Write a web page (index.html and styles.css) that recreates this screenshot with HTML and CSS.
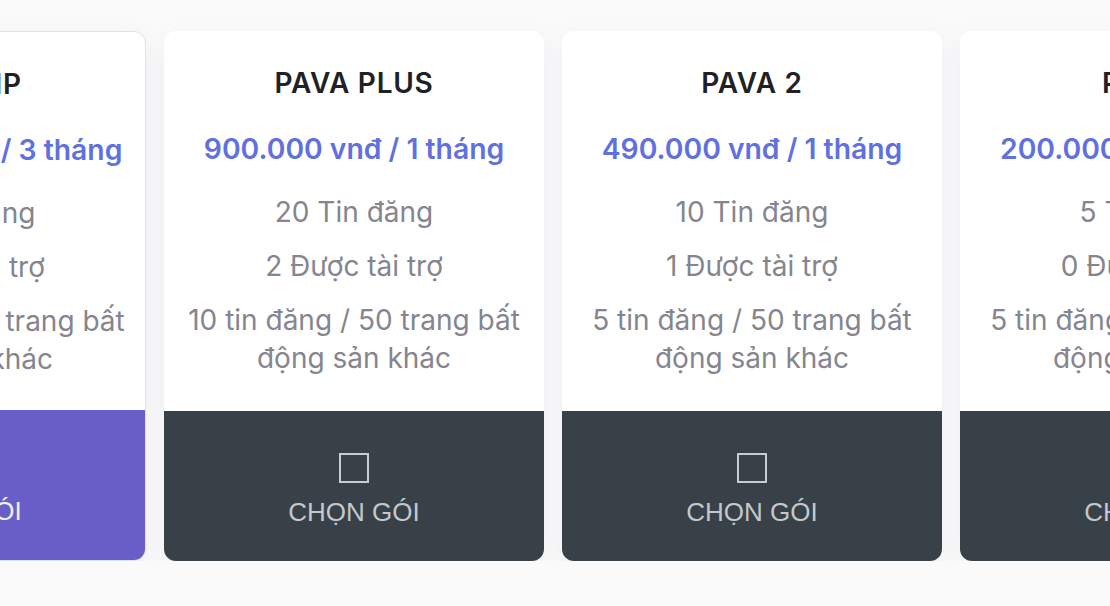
FILE: index.html
```html
<!DOCTYPE html>
<html lang="vi">
<head>
<meta charset="utf-8">
<title>Gói dịch vụ</title>
<link rel="stylesheet" href="styles.css">
</head>
<body>
<div class="viewport">
  <div class="track">
    <div class="card card-active">
      <div class="card-body">
        <h3 class="card-title">PAVA VIP</h3>
        <div class="card-price">2.000.000 vnđ / 3 tháng</div>
        <ul class="features">
          <li>60 Tin đăng</li>
          <li>5 Được tài trợ</li>
          <li>30 tin đăng / 50 trang bất động sản khác</li>
        </ul>
      </div>
      <button class="card-footer">
        <span class="check"></span>
        <span class="choose">CHỌN GÓI</span>
      </button>
    </div>
    <div class="card">
      <div class="card-body">
        <h3 class="card-title">PAVA PLUS</h3>
        <div class="card-price">900.000 vnđ / 1 tháng</div>
        <ul class="features">
          <li>20 Tin đăng</li>
          <li>2 Được tài trợ</li>
          <li>10 tin đăng / 50 trang bất động sản khác</li>
        </ul>
      </div>
      <button class="card-footer">
        <span class="check"></span>
        <span class="choose">CHỌN GÓI</span>
      </button>
    </div>
    <div class="card">
      <div class="card-body">
        <h3 class="card-title">PAVA 2</h3>
        <div class="card-price">490.000 vnđ / 1 tháng</div>
        <ul class="features">
          <li>10 Tin đăng</li>
          <li>1 Được tài trợ</li>
          <li>5 tin đăng / 50 trang bất động sản khác</li>
        </ul>
      </div>
      <button class="card-footer">
        <span class="check"></span>
        <span class="choose">CHỌN GÓI</span>
      </button>
    </div>
    <div class="card">
      <div class="card-body">
        <h3 class="card-title">PAVA 1</h3>
        <div class="card-price">200.000 vnđ / 1 tháng</div>
        <ul class="features">
          <li>5 Tin đăng</li>
          <li>0 Được tài trợ</li>
          <li>5 tin đăng / 50 trang bất động sản khác</li>
        </ul>
      </div>
      <button class="card-footer">
        <span class="check"></span>
        <span class="choose">CHỌN GÓI</span>
      </button>
    </div>
  </div>
</div>
</body>
</html>
```

FILE: styles.css
```css
html, body {
  margin: 0;
  padding: 0;
}

body {
  background: #fafafb;
  font-family: Inter, "Noto Sans", sans-serif;
  width: 1110px;
  height: 606px;
  overflow: hidden;
}

.viewport {
  width: 1110px;
  overflow: hidden;
}

.track {
  display: flex;
  gap: 18px;
  padding-top: 31px;
  margin-left: -234px;
}

.card {
  flex: 0 0 380px;
  width: 380px;
  height: 530px;
  box-sizing: border-box;
  background: #ffffff;
  border-radius: 12px;
  box-shadow: 0 6px 24px rgba(30, 40, 80, 0.05);
  display: flex;
  flex-direction: column;
  overflow: hidden;
}

.card-active {
  border: 1.5px solid #d8e3f7;
}

.card-body {
  padding: 0 16px;
  text-align: center;
}

.card-title {
  margin: 35px 0 0;
  font-size: 28px;
  font-weight: 600;
  letter-spacing: 0.7px;
  color: #202124;
  line-height: 34px;
}

.card-price {
  margin-top: 32px;
  font-size: 28.3px;
  font-weight: 600;
  line-height: 34px;
  color: #5f70e0;
}

.features {
  list-style: none;
  margin: 27px 0 0;
  padding: 0;
}

.features li {
  font-size: 28px;
  line-height: 38px;
  color: #85858f;
  margin-bottom: 16px;
}

.card-footer {
  margin-top: auto;
  height: 150px;
  flex: 0 0 150px;
  border: none;
  background: #374147;
  display: flex;
  flex-direction: column;
  align-items: center;
  padding: 42px 0 0;
  font: inherit;
  cursor: pointer;
}

.card-active .card-footer {
  background: #695ec8;
}

.check {
  width: 26px;
  height: 26px;
  border: 2px solid #c9cdd0;
  display: block;
}

.choose {
  margin-top: 13px;
  font-family: "Liberation Sans", Arial, sans-serif;
  font-size: 26px;
  line-height: 32px;
  color: #c4c8cb;
}

.card-active .choose {
  color: #f2f0fb;
}
```
